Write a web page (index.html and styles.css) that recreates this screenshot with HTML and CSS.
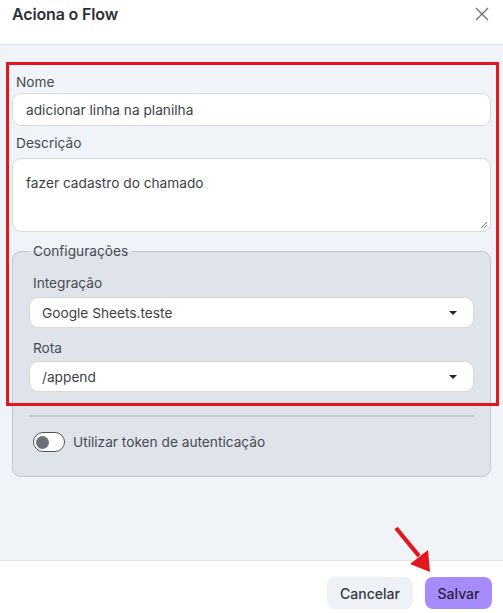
FILE: index.html
```html
<!DOCTYPE html>
<html lang="pt">
<head>
<meta charset="utf-8">
<title>Aciona o Flow</title>
<link rel="stylesheet" href="styles.css">
</head>
<body>
<div class="modal">
  <header class="modal-header">
    <h1 class="modal-title">Aciona o Flow</h1>
    <button class="close-btn" aria-label="Fechar">
      <svg width="14" height="14" viewBox="0 0 14 14"><path d="M1 1L13 13M13 1L1 13" stroke="#6b7078" stroke-width="1.3" fill="none"/></svg>
    </button>
  </header>
  <main class="modal-body">
    <div class="field">
      <label class="label">Nome</label>
      <div class="input">adicionar linha na planilha</div>
    </div>
    <div class="field field-desc">
      <label class="label">Descrição</label>
      <div class="textarea">fazer cadastro do chamado
        <svg class="resize" width="8" height="8" viewBox="0 0 8 8"><path d="M7 1L1 7M7 4L4 7" stroke="#777" stroke-width="1" fill="none"/></svg>
      </div>
    </div>
    <fieldset class="config">
      <legend class="legend">Configurações</legend>
      <div class="field field-sub">
        <label class="label">Integração</label>
        <div class="select"><span>Google Sheets.teste</span><span class="caret"></span></div>
      </div>
      <div class="field field-sub2">
        <label class="label">Rota</label>
        <div class="select"><span>/append</span><span class="caret"></span></div>
      </div>
      <hr class="divider">
      <div class="toggle-row">
        <span class="toggle"><span class="knob"></span></span>
        <span class="toggle-label">Utilizar token de autenticação</span>
      </div>
    </fieldset>
  </main>
  <footer class="modal-footer">
    <button class="btn btn-cancel">Cancelar</button>
    <button class="btn btn-save">Salvar</button>
  </footer>
  <div class="highlight"></div>
  <svg class="arrow" width="503" height="613" viewBox="0 0 503 613">
    <line x1="396" y1="528" x2="419" y2="556" stroke="#e3161d" stroke-width="4.2" stroke-linecap="butt"/>
    <polygon points="430,572 410,564 428,550" fill="#e3161d"/>
  </svg>
</div>
</body>
</html>
```

FILE: styles.css
```css
* { box-sizing: border-box; }
html, body { margin: 0; padding: 0; }
body {
  font-family: Inter, "Noto Sans", sans-serif;
  color: #3b3f47;
  background: #ffffff;
  width: 503px;
  height: 613px;
  overflow: hidden;
}
.modal {
  position: relative;
  width: 503px;
  height: 613px;
  display: flex;
  flex-direction: column;
}
.modal-header {
  height: 45px;
  flex: 0 0 45px;
  display: flex;
  align-items: flex-start;
  justify-content: space-between;
  padding: 3px 14px 0 12px;
  border-bottom: 1px solid #dfe2e7;
  background: #fff;
}
.modal-title {
  margin: 0;
  font-size: 16px;
  font-weight: 600;
  line-height: 22px;
  color: #2e3037;
  letter-spacing: -0.15px;
}
.close-btn {
  border: 0;
  background: none;
  padding: 0;
  margin-top: 4px;
  width: 14px;
  height: 14px;
  cursor: pointer;
}
.close-btn svg { display: block; }
.modal-body {
  flex: 1 1 auto;
  background: #f0f3f7;
  padding: 27px 12px 0 12px;
  border-bottom: 1px solid #dfe2e7;
}
.field { display: flex; flex-direction: column; }
.label {
  font-size: 13.7px;
  line-height: 20px;
  color: #474b54;
  margin-bottom: 1px;
  padding-left: 4px;
}
.field-desc { margin-top: 7px; }
.field-desc .label { margin-bottom: 5px; }
.input {
  height: 33px;
  background: #fff;
  border: 1px solid #d6d9de;
  border-radius: 9px;
  padding: 0 13px;
  display: flex;
  align-items: center;
  font-size: 13.7px;
  color: #3b3f47;
}
.textarea {
  position: relative;
  height: 74px;
  background: #fff;
  border: 1px solid #d6d9de;
  border-radius: 9px;
  padding: 14px 13px;
  font-size: 13.7px;
  line-height: 20px;
  color: #3b3f47;
}
.resize {
  position: absolute;
  right: 2px;
  bottom: 2px;
}
.config {
  margin: 9px 0 0 0;
  padding: 0 16px 24px 16px;
  border: 1px solid #c3c7ce;
  border-radius: 9px;
  background: #dfe3ea;
  min-width: 0;
}
.legend {
  padding: 0 4px;
  font-size: 13.7px;
  line-height: 20px;
  color: #474b54;
}
.field-sub { margin-top: 12px; }
.field-sub .label { margin-bottom: 4px; }
.field-sub2 { margin-top: 10px; }
.field-sub2 .label { margin-bottom: 3px; }
.select {
  height: 31px;
  background: #fff;
  border: 1px solid #d6d9de;
  border-radius: 9px;
  padding: 0 16px 0 12px;
  display: flex;
  align-items: center;
  justify-content: space-between;
  font-size: 13.7px;
  color: #3b3f47;
}
.caret {
  width: 0;
  height: 0;
  border-left: 4px solid transparent;
  border-right: 4px solid transparent;
  border-top: 4px solid #1e2533;
}
.divider {
  margin: 23px 0 0 0;
  border: 0;
  border-top: 2px solid #c9cdd4;
  height: 0;
}
.toggle-row {
  display: flex;
  align-items: center;
  margin-top: 15px;
  gap: 8px;
  padding-left: 4px;
}
.toggle {
  width: 32px;
  height: 20px;
  border: 1.5px solid #50545c;
  border-radius: 10px;
  background: #fff;
  display: flex;
  align-items: center;
  padding-left: 2px;
}
.knob {
  width: 13px;
  height: 13px;
  border-radius: 50%;
  background: #6d7179;
}
.toggle-label {
  font-size: 13.7px;
  color: #474b54;
}
.modal-footer {
  flex: 0 0 52px;
  height: 52px;
  background: #fff;
  display: flex;
  justify-content: flex-end;
  align-items: flex-start;
  gap: 12px;
  padding: 16px 11px 0 0;
}
.btn {
  height: 32px;
  border: 0;
  border-radius: 8px;
  font-family: Inter, "Noto Sans", sans-serif;
  font-size: 14px;
  font-weight: 500;
  padding: 0 10px;
  cursor: pointer;
}
.btn-cancel {
  width: 86px;
  background: #eef1f5;
  color: #363a42;
}
.btn-save {
  width: 67px;
  background: #a78bfa;
  color: #2a2340;
}
.highlight {
  position: absolute;
  left: 6px;
  top: 62px;
  width: 493px;
  height: 344px;
  border: 3.5px solid #e3161d;
  pointer-events: none;
}
.arrow {
  position: absolute;
  left: 0;
  top: 0;
  pointer-events: none;
}
```
